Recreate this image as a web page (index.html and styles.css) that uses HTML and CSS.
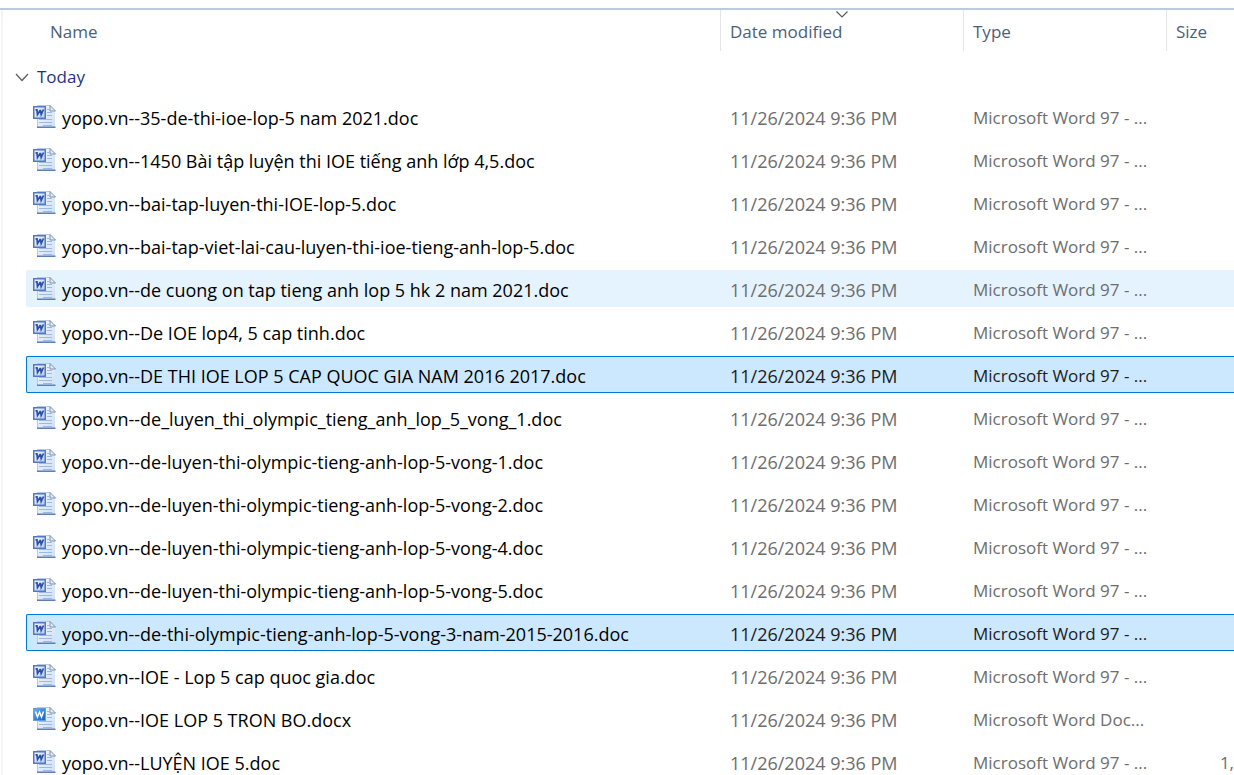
FILE: index.html
```
<!DOCTYPE html>
<html lang="en">
<head>
<meta charset="utf-8">
<title>Files</title>
<link rel="stylesheet" href="styles.css">
</head>
<body>
<svg class="defs" aria-hidden="true">
  <defs>
    <linearGradient id="page" x1="0" y1="0" x2="1" y2="1"><stop offset="0" stop-color="#f4f9ff"/><stop offset="1" stop-color="#cfdff5"/></linearGradient>
    <linearGradient id="side" x1="0" y1="0" x2="0" y2="1"><stop offset="0" stop-color="#7b93b4"/><stop offset="1" stop-color="#44689f"/></linearGradient>
    <linearGradient id="badge" x1="0" y1="0" x2="1" y2="1"><stop offset="0" stop-color="#f5f9ff"/><stop offset="1" stop-color="#b4cdf3"/></linearGradient>
    <linearGradient id="badgex" x1="0" y1="0" x2="1" y2="1"><stop offset="0" stop-color="#6fb2ee"/><stop offset="1" stop-color="#1460b8"/></linearGradient>
    <symbol id="sheet" viewBox="0 0 23 23">
      <path d="M4 1H17L22 6V22H4Z" fill="url(#page)"/>
      <path d="M4.500 12V22M4 .5H17" stroke="#b5cae6" fill="none"/>
      <path d="M4 22.250H22.500" stroke="#5c7fb5" stroke-width="1.500"/>
      <path d="M22 6V23" stroke="url(#side)" stroke-width="1.500"/>
      <path d="M17 .5V6H22.500Z" fill="#e6edf6" stroke="#7d91ad"/>
      <path d="M14 4.500H16M14 7.500H19M14 10.500H19M6 14.500H19M6 17.500H19M10 20.500H19" stroke="#9db9e2"/>
    </symbol>
    <symbol id="doc" viewBox="0 0 23 23">
      <use href="#sheet" width="23" height="23"/>
      <rect x=".75" y="1.750" width="11.500" height="11.500" fill="url(#badge)" stroke="#5479c4" stroke-width="1.500"/>
      <path d="M2.500 4.800H4L4.500 9.500L7 5.500H7.500L8.200 9.500L10.500 4.500" fill="none" stroke="#2c4fa8" stroke-width="1.700"/>
    </symbol>
    <symbol id="docx" viewBox="0 0 23 23">
      <use href="#sheet" width="23" height="23"/>
      <rect x=".5" y="1.500" width="12" height="12" fill="url(#badgex)" stroke="#5ba2e2"/>
      <path d="M2.500 4.500L4.500 10L6.500 5L8.500 10L10.500 4.500" fill="none" stroke="#fff" stroke-width="1.500"/>
    </symbol>
  </defs>
</svg>
<main class="pane">
<table class="files">
  <thead>
    <tr class="cols head">
      <th class="name-head" scope="col">Name</th>
      <th scope="col" aria-sort="descending">Date modified<svg class="sort" width="12" height="7" viewBox="0 0 12 7" aria-hidden="true"><path d="M.5 .5L6 6L11.500 .5"/></svg></th>
      <th scope="col">Type</th>
      <th scope="col">Size</th>
    </tr>
  </thead>
  <tbody class="rows">
    <tr class="group"><th scope="rowgroup"><button class="toggle" type="button" aria-expanded="true"><svg width="14" height="9" viewBox="0 0 14 9" aria-hidden="true"><path d="M1 1L7 7.500L13 1"/></svg>Today</button></th></tr>
    <tr class="cols row"><td class="name"><svg class="icon"><use href="#doc"/></svg>yopo.vn--35-de-thi-ioe-lop-5 nam 2021.doc</td><td class="date">11/26/2024 9:36 PM</td><td>Microsoft Word 97 - ...</td><td class="size"></td></tr>
    <tr class="cols row"><td class="name"><svg class="icon"><use href="#doc"/></svg>yopo.vn--1450 Bài tập luyện thi IOE tiếng anh lớp 4,5.doc</td><td class="date">11/26/2024 9:36 PM</td><td>Microsoft Word 97 - ...</td><td class="size"></td></tr>
    <tr class="cols row"><td class="name"><svg class="icon"><use href="#doc"/></svg>yopo.vn--bai-tap-luyen-thi-IOE-lop-5.doc</td><td class="date">11/26/2024 9:36 PM</td><td>Microsoft Word 97 - ...</td><td class="size"></td></tr>
    <tr class="cols row"><td class="name"><svg class="icon"><use href="#doc"/></svg>yopo.vn--bai-tap-viet-lai-cau-luyen-thi-ioe-tieng-anh-lop-5.doc</td><td class="date">11/26/2024 9:36 PM</td><td>Microsoft Word 97 - ...</td><td class="size"></td></tr>
    <tr class="cols row hover"><td class="name"><svg class="icon"><use href="#doc"/></svg>yopo.vn--de cuong on tap tieng anh lop 5 hk 2 nam 2021.doc</td><td class="date">11/26/2024 9:36 PM</td><td>Microsoft Word 97 - ...</td><td class="size"></td></tr>
    <tr class="cols row"><td class="name"><svg class="icon"><use href="#doc"/></svg>yopo.vn--De IOE lop4, 5 cap tinh.doc</td><td class="date">11/26/2024 9:36 PM</td><td>Microsoft Word 97 - ...</td><td class="size"></td></tr>
    <tr class="cols row selected"><td class="name"><svg class="icon"><use href="#doc"/></svg>yopo.vn--DE THI IOE LOP 5 CAP QUOC GIA NAM 2016 2017.doc</td><td class="date">11/26/2024 9:36 PM</td><td>Microsoft Word 97 - ...</td><td class="size"></td></tr>
    <tr class="cols row"><td class="name"><svg class="icon"><use href="#doc"/></svg>yopo.vn--de_luyen_thi_olympic_tieng_anh_lop_5_vong_1.doc</td><td class="date">11/26/2024 9:36 PM</td><td>Microsoft Word 97 - ...</td><td class="size"></td></tr>
    <tr class="cols row"><td class="name"><svg class="icon"><use href="#doc"/></svg>yopo.vn--de-luyen-thi-olympic-tieng-anh-lop-5-vong-1.doc</td><td class="date">11/26/2024 9:36 PM</td><td>Microsoft Word 97 - ...</td><td class="size"></td></tr>
    <tr class="cols row"><td class="name"><svg class="icon"><use href="#doc"/></svg>yopo.vn--de-luyen-thi-olympic-tieng-anh-lop-5-vong-2.doc</td><td class="date">11/26/2024 9:36 PM</td><td>Microsoft Word 97 - ...</td><td class="size"></td></tr>
    <tr class="cols row"><td class="name"><svg class="icon"><use href="#doc"/></svg>yopo.vn--de-luyen-thi-olympic-tieng-anh-lop-5-vong-4.doc</td><td class="date">11/26/2024 9:36 PM</td><td>Microsoft Word 97 - ...</td><td class="size"></td></tr>
    <tr class="cols row"><td class="name"><svg class="icon"><use href="#doc"/></svg>yopo.vn--de-luyen-thi-olympic-tieng-anh-lop-5-vong-5.doc</td><td class="date">11/26/2024 9:36 PM</td><td>Microsoft Word 97 - ...</td><td class="size"></td></tr>
    <tr class="cols row selected"><td class="name"><svg class="icon"><use href="#doc"/></svg>yopo.vn--de-thi-olympic-tieng-anh-lop-5-vong-3-nam-2015-2016.doc</td><td class="date">11/26/2024 9:36 PM</td><td>Microsoft Word 97 - ...</td><td class="size"></td></tr>
    <tr class="cols row"><td class="name"><svg class="icon"><use href="#doc"/></svg>yopo.vn--IOE - Lop 5 cap quoc gia.doc</td><td class="date">11/26/2024 9:36 PM</td><td>Microsoft Word 97 - ...</td><td class="size"></td></tr>
    <tr class="cols row"><td class="name"><svg class="icon"><use href="#docx"/></svg>yopo.vn--IOE LOP 5 TRON BO.docx</td><td class="date">11/26/2024 9:36 PM</td><td>Microsoft Word Doc...</td><td class="size"></td></tr>
    <tr class="cols row"><td class="name"><svg class="icon"><use href="#doc"/></svg>yopo.vn--LUYỆN IOE 5.doc</td><td class="date">11/26/2024 9:36 PM</td><td>Microsoft Word 97 - ...</td><td class="size">1,</td></tr>
  </tbody>
</table>
</main>
</body>
</html>
```
FILE: styles.css
```
* { box-sizing: border-box; }

html, body { height: 100%; }

body {
  margin: 0;
  padding-top: 8px;
  overflow: hidden;
  background: #fff;
  color: #000;
  font: 17px/24px "Open Sans", "Noto Sans", sans-serif;
}

.defs { position: absolute; width: 0; height: 0; }

.pane {
  height: 100%;
  overflow: hidden;
  border-top: 2px solid #bccbdb;
}

.files {
  display: block;
  margin-left: 1px;
  border-left: 2px solid #f5f5f5;
}

.files thead { display: block; }

.files th, .files td {
  padding: 0;
  text-align: left;
  font-weight: 400;
  white-space: nowrap;
}

.cols {
  display: grid;
  grid-template-columns: minmax(0, 1fr) 243px 203px 68px;
  margin-left: 23px;
}

.head { color: #4c607a; }

.files .head th {
  position: relative;
  height: 41px;
  padding: 10px 0 0 9px;
  border-left: 1px solid #e5e5e5;
}

.files .head .name-head { padding-left: 24px; border-left: 0; }

.sort {
  position: absolute;
  top: 1px;
  left: 50%;
  margin-left: -6px;
}

.sort path, .toggle path { fill: none; stroke: #5a5a5a; stroke-width: 1.2; }

.rows {
  display: flex;
  flex-direction: column;
  gap: 6px;
  padding-top: 9px;
}

.group { display: block; height: 32px; padding: 5px 0 0 12px; }
.group th { display: block; }

.toggle {
  display: flex;
  align-items: center;
  gap: 8px;
  padding: 0;
  border: 0;
  background: none;
  color: #1e3287;
  font: inherit;
}

.row {
  align-items: center;
  height: 37px;
  border: 1px solid transparent;
  border-right: 0;
  border-radius: 2px 0 0 2px;
}

.files .row td { padding: 2px 0 0 10px; color: #6d6d6d; }

.files .row .name {
  display: flex;
  align-items: center;
  gap: 6px;
  padding-left: 6px;
  color: #000;
}

.row .name, .row .date { font-size: 18px; }

.icon { flex: none; width: 23px; height: 23px; margin-bottom: 2px; }

.files .row .size { padding-left: 0; text-align: right; }

.hover { background: #e5f3ff; }
.selected { border-color: #0078d7; background: #cce8ff; }
.files .selected td { color: #1c1c1c; }
```
